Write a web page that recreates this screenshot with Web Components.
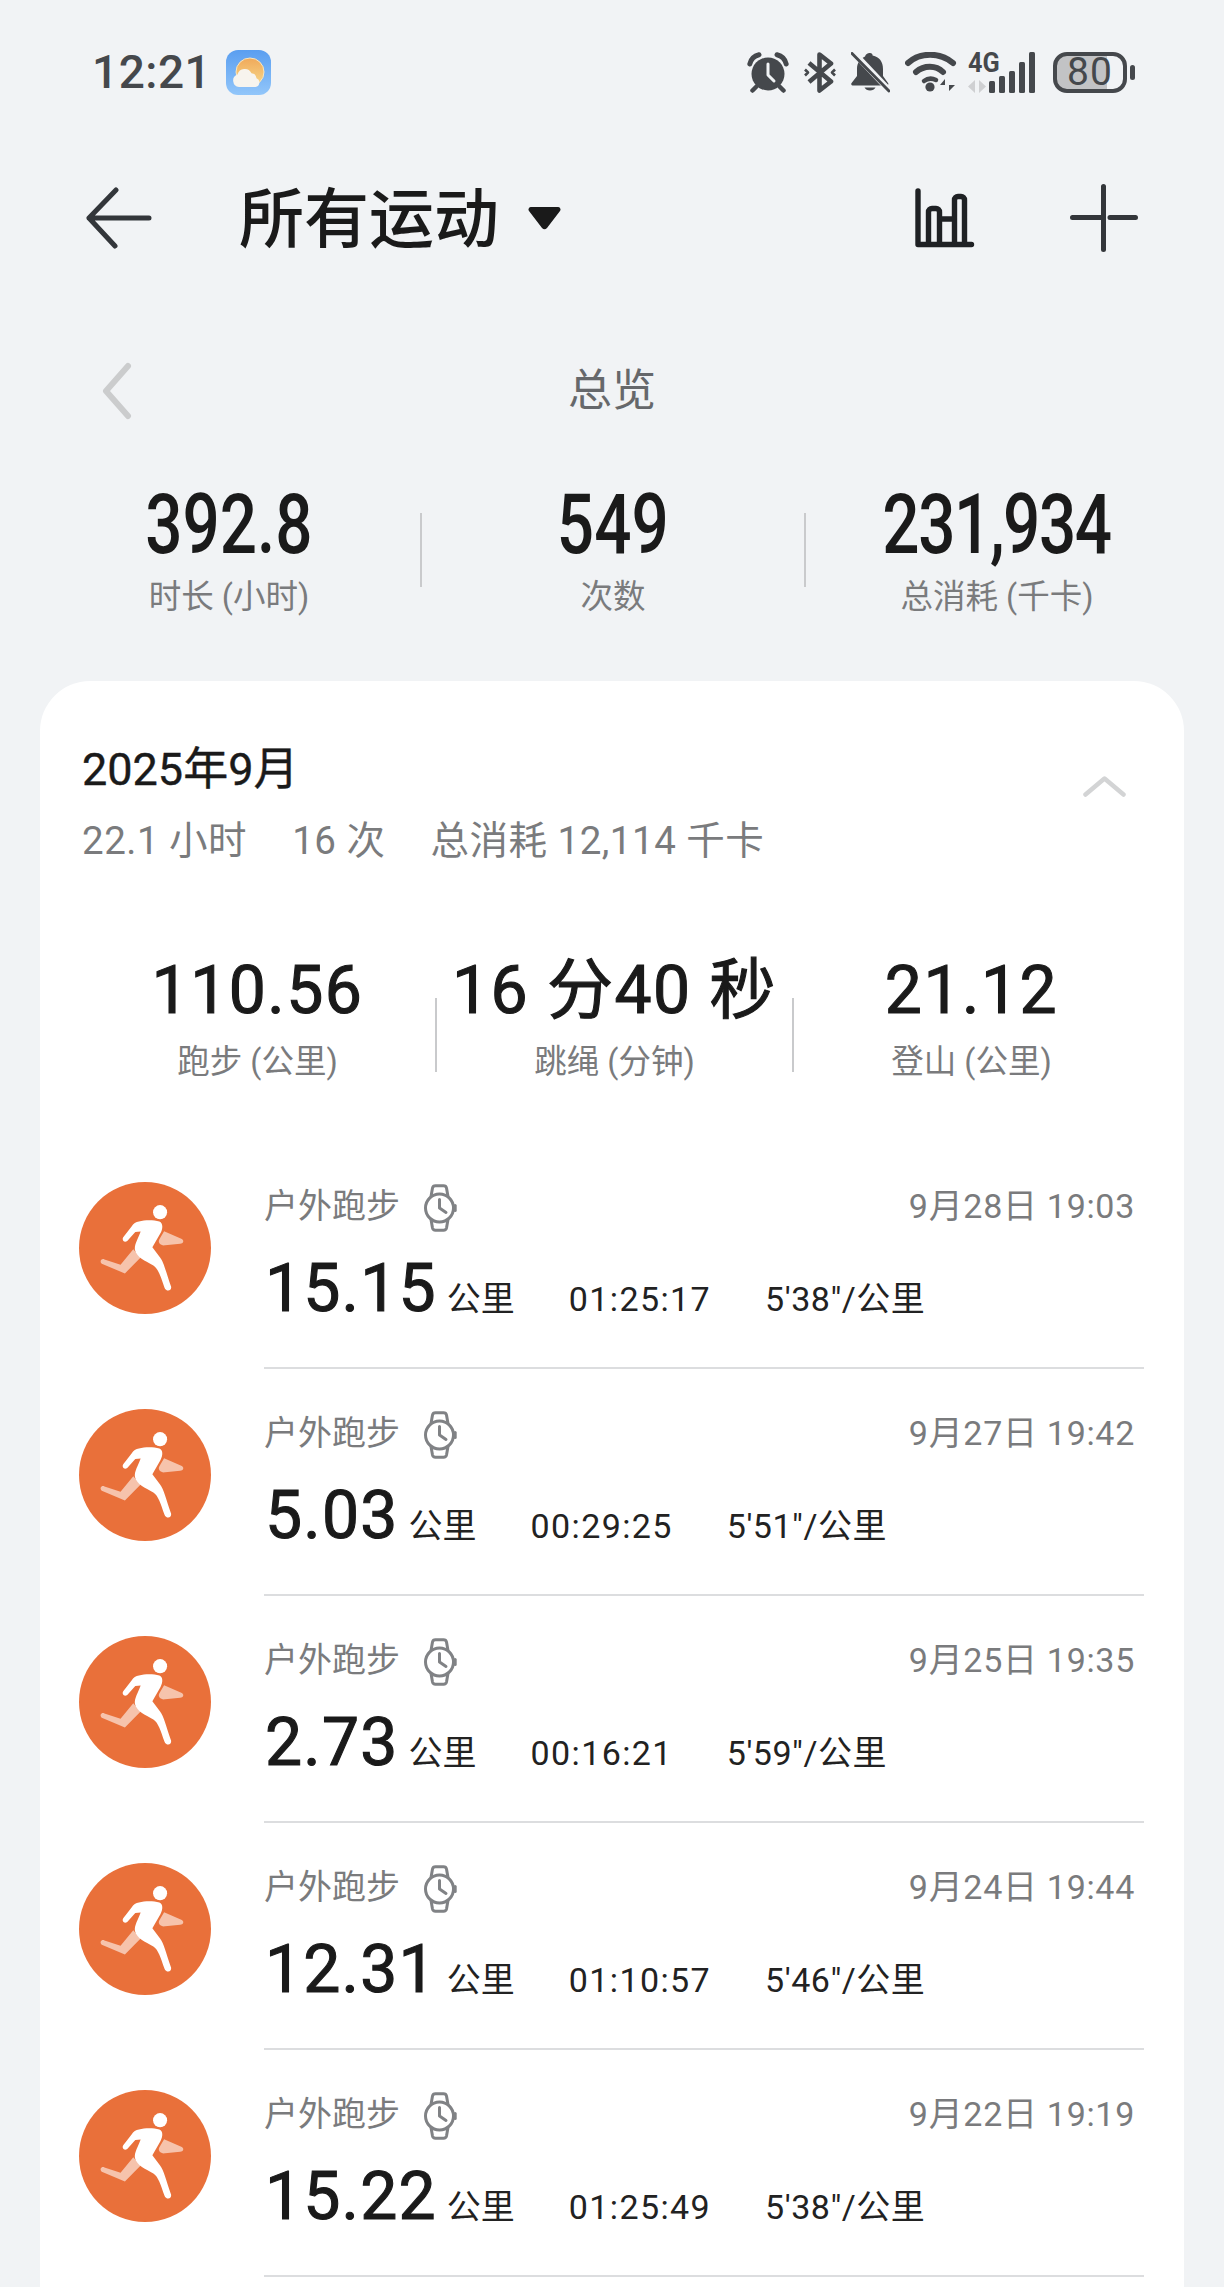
<!DOCTYPE html>
<html lang="zh-CN">
<head>
<meta charset="utf-8">
<title>所有运动</title>
<style>
  html, body { margin: 0; padding: 0; background: #f1f3f5; }
  body {
    width: 1224px; height: 2287px; overflow: hidden;
    font-family: Roboto, "Noto Sans CJK SC", sans-serif; color: #1a1a1a;
  }
</style>
</head>
<body>
<status-bar></status-bar>
<nav-header>所有运动</nav-header>
<overview-panel>
  <stat-cell><span slot="value">392.8</span><span slot="label">时长 (小时)</span></stat-cell>
  <i-rule></i-rule>
  <stat-cell><span slot="value">549</span><span slot="label">次数</span></stat-cell>
  <i-rule></i-rule>
  <stat-cell><span slot="value" style="letter-spacing:-1.8px">231,934</span><span slot="label">总消耗 (千卡)</span></stat-cell>
</overview-panel>
<month-card>
  <span slot="title">2025年9月</span>
  <span slot="summary">22.1 小时</span>
  <span slot="summary">16 次</span>
  <span slot="summary">总消耗 12,114 千卡</span>

  <metric-cell slot="metric"><span slot="value">110.56</span><span slot="label">跑步 (公里)</span></metric-cell>
  <i-rule slot="metric"></i-rule>
  <metric-cell slot="metric"><span slot="value">16 分40 秒</span><span slot="label">跳绳 (分钟)</span></metric-cell>
  <i-rule slot="metric"></i-rule>
  <metric-cell slot="metric"><span slot="value">21.12</span><span slot="label">登山 (公里)</span></metric-cell>

  <workout-row date="9月28日 19:03" dist="15.15" time="01:25:17" pace="5'38&quot;/公里"></workout-row>
  <workout-row date="9月27日 19:42" dist="5.03" time="00:29:25" pace="5'51&quot;/公里"></workout-row>
  <workout-row date="9月25日 19:35" dist="2.73" time="00:16:21" pace="5'59&quot;/公里"></workout-row>
  <workout-row date="9月24日 19:44" dist="12.31" time="01:10:57" pace="5'46&quot;/公里"></workout-row>
  <workout-row date="9月22日 19:19" dist="15.22" time="01:25:49" pace="5'38&quot;/公里"></workout-row>
</month-card>

<script>
  // Small helper: every element owns an open shadow root filled from a string.
  class Base extends HTMLElement {
    constructor() {
      super();
      this.attachShadow({ mode: 'open' });
    }
  }

  class StatusBar extends Base {
    connectedCallback() {
      this.shadowRoot.innerHTML = `
      <style>
        :host { display: flex; align-items: center; height: 144px; padding: 0 89px 0 92px; box-sizing: border-box; color: #45484c; }
        .time { font: 500 46px/1 Roboto, sans-serif; letter-spacing: .5px; }
        .left { display: flex; align-items: center; gap: 15px; }
        .right { margin-left: auto; display: flex; align-items: center; }
        svg { display: block; flex: none; }
        .net { position: relative; margin-left: 11px; }
        .net b { position: absolute; left: 0; top: -1px; font: 700 28px/24px Roboto, sans-serif; transform: scaleX(.9); transform-origin: 0 50%; color: #45484c; }
        .batt { position: relative; width: 74px; height: 41px; box-sizing: border-box; border: 4px solid #45484c; border-radius: 14px;
                background: linear-gradient(90deg, #c2c3c5 0 50px, transparent 50px);
                font: 400 39px/33px Roboto, sans-serif; text-align: center; letter-spacing: 1px; }
        .batt::after { content: ""; position: absolute; left: 73px; top: 9px; width: 5px; height: 15px; border-radius: 3px; background: #45484c; }
      </style>
      <div class="left">
        <span class="time">12:21</span>
        <svg width="45" height="45" viewBox="0 0 45 45">
          <defs>
            <linearGradient id="sky" x1="0" y1="0" x2="0" y2="1"><stop offset="0" stop-color="#5a9ef0"/><stop offset="1" stop-color="#92c6fa"/></linearGradient>
            <linearGradient id="sun" x1="0" y1="0" x2="0" y2="1"><stop offset="0" stop-color="#f0a95a"/><stop offset="1" stop-color="#f7d88a"/></linearGradient>
          </defs>
          <rect width="45" height="45" rx="12" fill="url(#sky)"/>
          <circle cx="24" cy="22" r="14" fill="url(#sun)" stroke="#f7e6c0" stroke-width="1"/>
          <path d="M13 37 a6.5 6.5 0 0 1 -1.5 -12.6 a7.5 7.5 0 0 1 14 -1.2 a5.5 5.5 0 0 1 5 5 a4.6 4.6 0 0 1 -1 8.8 Z" fill="#f7f4ee"/>
        </svg>
      </div>
      <div class="right">
        <svg width="42" height="41" viewBox="0 0 42 41" fill="#45484c">
          <circle cx="21" cy="22" r="16.5"/>
          <path d="M21 12 V23 L27 29" fill="none" stroke="#f1f3f5" stroke-width="3" stroke-linecap="round" stroke-linejoin="round"/>
          <path d="M2.8 12 C4 7 7 4 12 2.8 M39.2 12 C38 7 35 4 30 2.8" fill="none" stroke="#45484c" stroke-width="5" stroke-linecap="round"/>
          <path d="M9 35 L5.5 38.5 M33 35 L36.5 38.5" stroke="#45484c" stroke-width="4.5" stroke-linecap="round"/>
        </svg>
        <svg width="32" height="41" viewBox="0 0 32 41" style="margin-left:15px" fill="none" stroke="#45484c" stroke-width="4.6" stroke-linejoin="round">
          <path d="M5 11 L27 29.5 L15.5 38.5 V2.5 L27 11.5 L5 30"/>
          <path d="M1 17.5 L4 20.5 L1 23.5 M31 17.5 L28 20.5 L31 23.5" stroke-width="2.6"/>
        </svg>
        <svg width="39" height="41" viewBox="0 0 39 41" style="margin-left:15px">
          <path d="M19 1 a2.6 2.6 0 0 1 2.6 2.6 C28.5 5 32 10 32 17 V24 L37 31 a1.5 1.5 0 0 1 -1 2.5 H1.6 a1.5 1.5 0 0 1 -1 -2.5 L6 24 V17 C6 11 9 7 14 4.6 A5 5 0 0 1 19 1 Z" fill="#45484c"/>
          <path d="M13.5 35.5 H24.5 A6 5 0 0 1 13.5 35.5 Z" fill="#45484c"/>
          <path d="M2 0 L38 38" stroke="#f1f3f5" stroke-width="6"/>
          <path d="M1 1.5 L38 39" stroke="#45484c" stroke-width="3" stroke-linecap="round"/>
        </svg>
        <svg width="52" height="40" viewBox="0 0 52 40" style="margin-left:15px" fill="none" stroke="#45484c" stroke-width="6" stroke-linecap="round">
          <path d="M3 11 C15 0 35 0 48 11"/>
          <path d="M11 20 C19 13 31 13 38 20"/>
          <path d="M19 29 C23 26 27 26 31 28" stroke-width="4.5"/>
          <circle cx="25" cy="35" r="4.6" fill="#45484c" stroke="none"/>
          <path d="M40 40 V27 L35 33 H40 Z M44 26 V39 L50 33 H44 Z" fill="#45484c" stroke="none"/>
        </svg>
        <div class="net">
          <b>4G</b>
          <svg width="69" height="41" viewBox="0 0 69 41">
            <path d="M7 28 V41 L0 34.5 Z M11 28 L18 34.5 L11 41 Z" fill="#cfd0d2"/>
            <rect x="21" y="29" width="6" height="12" rx="1.5" fill="#45484c"/>
            <rect x="31" y="24" width="6" height="17" rx="1.5" fill="#45484c"/>
            <rect x="41" y="19" width="6" height="22" rx="1.5" fill="#45484c"/>
            <rect x="51" y="10" width="6" height="31" rx="1.5" fill="#45484c"/>
            <rect x="61" y="0" width="6" height="41" rx="1.5" fill="#45484c"/>
          </svg>
        </div>
        <div class="batt" style="margin-left:16px; margin-right:8px">80</div>
      </div>`;
    }
  }

  class NavHeader extends Base {
    connectedCallback() {
      this.shadowRoot.innerHTML = `
      <style>
        :host { display: flex; align-items: center; height: 148px; padding-left: 85px; box-sizing: border-box; }
        .title { font: 500 65px/80px Roboto, "Noto Sans CJK SC", sans-serif; margin: 3px 0 0 86px; color: #1a1a1a; }
        svg { display: block; flex: none; }
        .tri { margin-left: 29px; }
        .chart { margin-left: auto; }
        .plus { margin-left: 95px; margin-right: 86px; }
      </style>
      <svg width="68" height="62" viewBox="0 0 68 62" fill="none" stroke="#33363a" stroke-width="5" stroke-linecap="round" stroke-linejoin="round">
        <path d="M31 3 L4 31 L30 59 M4 31 H64"/>
      </svg>
      <span class="title"><slot></slot></span>
      <svg class="tri" width="33" height="23" viewBox="0 0 33 23"><path d="M3 0 H30 a2.5 2.5 0 0 1 2 4 L19 21 a3.5 3.5 0 0 1 -5 0 L1 4 a2.5 2.5 0 0 1 2 -4 Z" fill="#1a1a1a"/></svg>
      <svg class="chart" width="60" height="60" viewBox="0 0 60 60" fill="none" stroke="#1f2124" stroke-width="5.4" stroke-linecap="round" stroke-linejoin="round">
        <path d="M3 3 V56.5 H56.5"/>
        <path d="M13.5 56 V24 a3.5 3.5 0 0 1 3.5 -3.5 H21 a3.5 3.5 0 0 1 3.5 3.5 V56 M24.5 31 H39.5 M39.5 56 V12 a3.5 3.5 0 0 1 3.5 -3.5 H46 a3.5 3.5 0 0 1 3.5 3.5 V56"/>
      </svg>
      <svg class="plus" width="68" height="68" viewBox="0 0 68 68" fill="none" stroke="#33363a" stroke-width="5" stroke-linecap="round">
        <path d="M33.5 2.5 V65.5 M2.5 33.5 H31 M40 33.5 H65.5"/>
      </svg>`;
    }
  }

  class IRule extends Base {
    connectedCallback() {
      this.shadowRoot.innerHTML = `<style>:host { display: block; width: 2px; height: 74px; background: #c9cacc; }</style>`;
    }
  }

  class StatCell extends Base {
    connectedCallback() {
      this.shadowRoot.innerHTML = `
      <style>
        :host { display: flex; flex-direction: column; align-items: center; }
        .v { font: 500 83px/60px Roboto, sans-serif; transform: scaleX(.79); white-space: nowrap; color: #1a1a1a; }
        .l { font: 400 32.5px/40px Roboto, "Noto Sans CJK SC", sans-serif; color: #7a7b7d; margin-top: 22px; white-space: nowrap; }
      </style>
      <div class="v"><slot name="value"></slot></div>
      <div class="l"><slot name="label"></slot></div>`;
    }
  }

  class OverviewPanel extends Base {
    connectedCallback() {
      this.shadowRoot.innerHTML = `
      <style>
        :host { display: block; }
        .head { display: grid; grid-template-columns: 1fr auto 1fr; align-items: center; height: 60px; padding-top: 68px; box-sizing: content-box; }
        .back { padding-left: 102px; }
        .back svg { display: block; }
        .name { font: 400 44px/62px Roboto, "Noto Sans CJK SC", sans-serif; color: #66686b; }
        .stats { display: grid; grid-template-columns: 382px 2px 382px 2px 382px; padding: 75px 0 0 38px; align-items: start; }
        ::slotted(i-rule) { margin-top: 18px; }
      </style>
      <div class="head">
        <div class="back">
          <svg width="30" height="58" viewBox="0 0 30 58" fill="none" stroke="#cbcccd" stroke-width="6" stroke-linecap="round" stroke-linejoin="round"><path d="M26 4 L4 29 L26 54"/></svg>
        </div>
        <div class="name">总览</div>
        <div></div>
      </div>
      <div class="stats"><slot></slot></div>`;
    }
  }

  class MetricCell extends Base {
    connectedCallback() {
      this.shadowRoot.innerHTML = `
      <style>
        :host { display: flex; flex-direction: column; align-items: center; }
        .v { font: 400 66px/60px Roboto, "Noto Sans CJK SC", sans-serif; -webkit-text-stroke: 1.1px #1a1a1a; white-space: nowrap; color: #1a1a1a; letter-spacing: 1.5px; margin-top: 1px; }
        .l { font: 400 32.5px/40px Roboto, "Noto Sans CJK SC", sans-serif; color: #7a7b7d; margin-top: 21px; white-space: nowrap; }
      </style>
      <div class="v"><slot name="value"></slot></div>
      <div class="l"><slot name="label"></slot></div>`;
    }
  }

  class MonthCard extends Base {
    connectedCallback() {
      this.shadowRoot.innerHTML = `
      <style>
        :host { display: block; margin: 64px 40px 0; background: #fff; border-radius: 50px 50px 0 0; padding: 59px 0 40px; }
        .top { display: flex; justify-content: space-between; padding: 0 58px 0 42px; }
        .month { font: 400 45px/60px Roboto, "Noto Sans CJK SC", sans-serif; -webkit-text-stroke: .4px #1a1a1a; color: #1a1a1a; }
        .sum { display: flex; gap: 45px; margin-top: 19px; height: 43px; font: 400 38.5px/43px Roboto, "Noto Sans CJK SC", sans-serif; color: #7a7b7d; letter-spacing: .5px; white-space: nowrap; }
        .fold { display: block; margin-top: 36px; }
        .metrics { display: grid; grid-template-columns: 355px 2px 355px 2px 355px; padding: 98px 0 0 40px; align-items: start; }
        ::slotted(i-rule) { margin-top: 38px; }
        .rows { margin-top: 60px; padding-left: 39px; padding-right: 40px; }
      </style>
      <div class="top">
        <div>
          <div class="month"><slot name="title"></slot></div>
          <div class="sum"><slot name="summary"></slot></div>
        </div>
        <svg class="fold" width="43" height="21" viewBox="0 0 43 21" fill="none" stroke="#d3d4d5" stroke-width="4.5" stroke-linecap="round" stroke-linejoin="round"><path d="M2.5 18.5 L21.5 2.5 L40.5 18.5"/></svg>
      </div>
      <div class="metrics"><slot name="metric"></slot></div>
      <div class="rows"><slot></slot></div>`;
    }
  }

  class WorkoutRow extends Base {
    connectedCallback() {
      const a = n => this.getAttribute(n);
      this.shadowRoot.innerHTML = `
      <style>
        :host { display: flex; height: 227px; box-sizing: border-box; }
        .badge { flex: none; display: block; width: 132px; height: 132px; margin-top: 40px; margin-right: 53px; }
        .body { flex: 1; min-width: 0; border-bottom: 2px solid #dcdddf; padding-top: 44px; box-sizing: border-box; }
        .line1 { display: flex; align-items: center; height: 40px; padding-right: 9px; color: #7a7b7d; font: 400 34px/40px Roboto, "Noto Sans CJK SC", sans-serif; white-space: nowrap; }
        .watch { display: block; margin: 3px 0 0 23px; flex: none; }
        .date { margin-left: auto; letter-spacing: .7px; }
        .line2 { display: flex; align-items: baseline; gap: 54px; margin-top: 34px; padding-left: 1px; white-space: nowrap; font: 400 34px/58px Roboto, "Noto Sans CJK SC", sans-serif; color: #222; letter-spacing: 1.4px; }
        .num { font-size: 66px; font-weight: 400; -webkit-text-stroke: 1.1px #1a1a1a; color: #1a1a1a; letter-spacing: 1.2px; }
        .unit { font-size: 34px; margin-left: 10px; letter-spacing: 0; }
        .pace { letter-spacing: .5px; }
        .d { display: flex; align-items: baseline; }
      </style>
      <svg class="badge" viewBox="28 37 394 394">
        <circle cx="225" cy="234" r="197" fill="#e9703a"/>
        <path d="M190 238 L212 262 L165 310 L96 281 C88 274 95 264 104 268 L152 284 Z" fill="#f6c3ac"/>
        <path d="M282 184 L335 207 C343 212 339 221 330 221 L285 226 C272 228 262 218 268 208 Z" fill="#f6c3ac"/>
        <circle cx="270" cy="127" r="21" fill="#fff"/>
        <path d="M207 155 C225 150 250 150 268 155 C279 160 279 175 271 190 L247 232 L270 262 C281 276 286 300 303 350 C305 363 288 366 283 352 C272 320 265 296 250 286 C225 272 200 262 195 240 C192 225 205 205 212 185 L196 186 L172 213 C163 220 155 210 160 202 L185 170 C190 160 198 157 207 155 Z" fill="#fff"/>
      </svg>
      <div class="body">
        <div class="line1">
          <span>户外跑步</span>
          <svg class="watch" width="34" height="48" viewBox="0 0 34 48" fill="none" stroke="#808285" stroke-width="3" stroke-linejoin="round" stroke-linecap="round">
            <circle cx="16.5" cy="24" r="14"/>
            <path d="M8 12.5 L9.5 4 Q10 1.8 12.5 1.8 H20.5 Q23 1.8 23.5 4 L25 12.5"/>
            <path d="M8 35.5 L9.5 44 Q10 46.2 12.5 46.2 H20.5 Q23 46.2 23.5 44 L25 35.5"/>
            <path d="M16.5 15.5 V24 L23 28.5"/>
            <path d="M32.2 21.5 V26.5"/>
          </svg>
          <span class="date">${a('date')}</span>
        </div>
        <div class="line2">
          <span class="d"><span class="num">${a('dist')}</span><span class="unit">公里</span></span>
          <span>${a('time')}</span>
          <span class="pace">${a('pace')}</span>
        </div>
      </div>`;
    }
  }

  customElements.define('status-bar', StatusBar);
  customElements.define('nav-header', NavHeader);
  customElements.define('i-rule', IRule);
  customElements.define('stat-cell', StatCell);
  customElements.define('overview-panel', OverviewPanel);
  customElements.define('metric-cell', MetricCell);
  customElements.define('month-card', MonthCard);
  customElements.define('workout-row', WorkoutRow);
</script>
</body>
</html>
